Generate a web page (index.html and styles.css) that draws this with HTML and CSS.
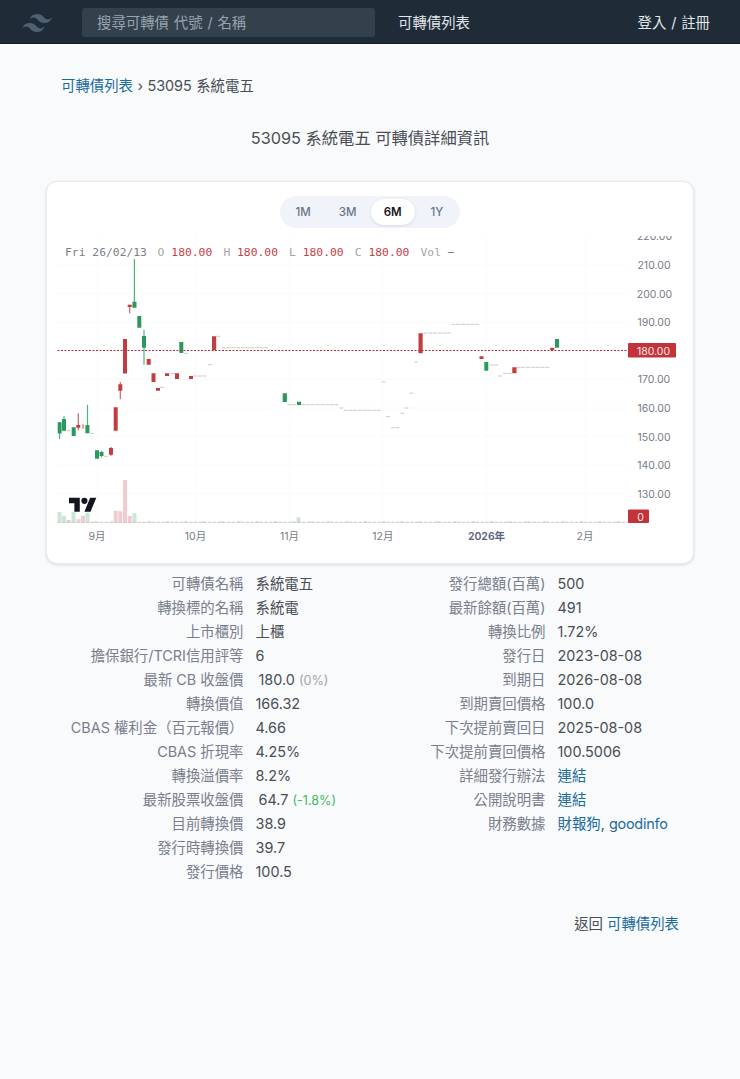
FILE: index.html
```html
<!DOCTYPE html>
<html lang="zh-Hant">
<head>
<meta charset="utf-8">
<title>53095 系統電五 可轉債詳細資訊</title>
<link rel="stylesheet" href="styles.css">
</head>
<body>
<header class="navbar">
  <svg class="logo" viewBox="0 0 54 32.4"><path d="M27 0c-7.2 0-11.7 3.6-13.5 10.8 2.7-3.6 5.85-4.95 9.45-4.05 2.054.513 3.522 2.004 5.147 3.653C30.744 13.09 33.808 16.2 40.5 16.2c7.2 0 11.7-3.6 13.5-10.8-2.7 3.6-5.85 4.95-9.45 4.05-2.054-.513-3.522-2.004-5.147-3.653C36.756 3.11 33.692 0 27 0zM13.5 16.2C6.3 16.2 1.8 19.8 0 27c2.7-3.6 5.85-4.95 9.45-4.05 2.054.514 3.522 2.004 5.147 3.653C17.244 29.29 20.308 32.4 27 32.4c7.2 0 11.7-3.6 13.5-10.8-2.7 3.6-5.85 4.95-9.45 4.05-2.054-.513-3.522-2.004-5.147-3.653C23.256 19.31 20.192 16.2 13.5 16.2z"/></svg>
  <div class="search">搜尋可轉債 代號 / 名稱</div>
  <a class="nav-link">可轉債列表</a>
  <a class="nav-link login">登入 / 註冊</a>
</header>
<main>
  <nav class="breadcrumb"><a class="link">可轉債列表</a> › 53095 系統電五</nav>
  <h1 class="title">53095 系統電五 可轉債詳細資訊</h1>
  <section class="card">
    <div class="tabs"><span class="tab">1M</span><span class="tab">3M</span><span class="tab active">6M</span><span class="tab">1Y</span></div>
    <svg class="chart" viewBox="57 236 626 312">
      <path class="grid" d="M57 265h571M57 293.5h571M57 322h571M57 379h571M57 408h571M57 436.5h571M57 465h571M57 493.5h571M97.5 236v286M195.5 236v286M289.500 236v286M382.500 236v286M486.500 236v286M585.500 236v286"/>
      <g class="vol-up">
        <path d="M57.500 512h4v10.500h-4zM62 515.700h4v6.800h-4zM71.500 512h4v10.500h-4zM85.500 512.700h4v9.800h-4zM132.500 513.300h4v9.200h-4zM296.500 517.300h4v5.200h-4z"/>
      </g>
      <g class="vol-down">
        <path d="M76.500 519.300h4v3.200h-4zM81 515.700h4v6.800h-4zM113.700 510.700h4v11.800h-4zM118.300 511.300h4v11.200h-4zM123 480h4v42.500h-4zM127.700 516h4v6.500h-4zM66.700 520h4v2.500h-4z"/>
      </g>
      <path class="vol-line" d="M57.500 522.300H628"/>
      <path class="vol-line vol-tips" d="M57.500 521.500H628"/>
      <path class="flat" d="M66.700 430.700h4M81.500 428h4M90 433.300h4M104 456.300h4.500M160 387.300h4M171 373.500h4M184 353.300h4M193 376h14M208 364.700h4M216.500 336.300h4M222 347.700h46M287.500 404.700h51.500M339.500 408h3.800M343.700 410.300h37.500M381.700 382h3.800M386 416.700h4M391 427.700h8.500M400.500 413.300h3.700M404.700 408h3.800M409.500 393.200h3.800M414.300 362h3.700M423.700 333h27.500M451.500 324.300h28M489.500 365h8.500M498 376h4M503 373.300h9M516.500 367.300h33.500"/>
      <g class="up">
        <path class="wick" d="M59.500 422v17M64 416.300v14M87.500 404.700v25M101.500 450.700v6.600M134.400 259v46M144 330v34.700"/>
        <path d="M57.700 422.200h3.900v11.200h-3.900zM62 419h4v11.700h-4zM71.700 427.300h4v8.700h-4zM85.400 425h4v8.300h-4zM95 450.300h4v8.400h-4zM99.500 452h4v4h-4zM132.400 301.700h4.100v6h-4.100zM137.300 316h4v11.700h-4zM142 336h4v11.700h-4zM179.300 342h4v11h-4zM282.700 393.300h4.200v8.700h-4.200zM297 401.700h4v3.300h-4zM484.300 362h4v8.700h-4zM555 339h4v8.700h-4z"/>
      </g>
      <g class="down">
        <path class="wick" d="M78.300 413.300v17M83 424.300v4M111 447v8.700M120.300 382v17.300M129.700 304.700v8.600"/>
        <path d="M76.300 425h4v2.700h-4zM109 448h4v6.700h-4zM113.700 407.300h4v23.400h-4zM118.300 384.300h4v6.400h-4zM123 339h4v34.500h-4zM127.700 304.700h4v2.300h-4zM146.700 359h4v5.700h-4zM151.500 373.300h4v8.700h-4zM156 388h4v2.700h-4zM165 373.300h4.200v2.700h-4.200zM175 373.300h4v5.700h-4zM189 376h4v3h-4zM212 336.300h4.200v14h-4.200zM418.500 333.300h4.200v20h-4.200zM479.500 356.300h4v2.700h-4zM512.300 367.300h4.200v6h-4.200zM550.200 347.700h4v2.600h-4z"/>
      </g>
      <path class="price-line" d="M57.500 350.500H628"/>
      <g class="legend">
        <text x="65" y="256" class="leg-date">Fri 26/02/13</text>
        <text x="157.500" y="256">O</text><text x="171.300" y="256" class="leg-num">180.00</text>
        <text x="223.500" y="256">H</text><text x="237" y="256" class="leg-num">180.00</text>
        <text x="289" y="256">L</text><text x="302.700" y="256" class="leg-num">180.00</text>
        <text x="354.800" y="256">C</text><text x="368.400" y="256" class="leg-num">180.00</text>
        <text x="420.500" y="256">Vol</text><text x="447.800" y="256" class="leg-date">−</text>
      </g>
      <g class="axis">
        <text x="654.500" y="240">220.00</text><text x="654" y="269">210.00</text><text x="654.500" y="297.500">200.00</text><text x="654" y="326">190.00</text><text x="654" y="383">170.00</text><text x="654" y="412">160.00</text><text x="654" y="440.500">150.00</text><text x="654" y="469">140.00</text><text x="654" y="497.500">130.00</text>
        <text x="97" y="540">9月</text><text x="195.500" y="540">10月</text><text x="289.500" y="540">11月</text><text x="382.800" y="540">12月</text><text x="486.500" y="540" class="year">2026年</text><text x="585" y="540">2月</text>
      </g>
      <rect class="badge" x="628" y="343" width="48" height="14.500" rx="1"/>
      <rect class="badge" x="628" y="509.400" width="21" height="13.500" rx="1"/>
      <g class="axis badge-text"><text x="653.500" y="354.500">180.00</text><text x="640.500" y="520.500">0</text></g>
      <g class="tv" transform="translate(69 494.700) scale(.77)"><path d="M14 22H7V11H0V4h14v18zM28 22h-8l7.500-18h8L28 22z"/><circle cx="20" cy="8" r="4"/></g>
    </svg>
  </section>
  <section class="details">
    <dl class="list left">
      <dt>可轉債名稱</dt><dd>系統電五</dd>
      <dt>轉換標的名稱</dt><dd>系統電</dd>
      <dt>上市櫃別</dt><dd>上櫃</dd>
      <dt>擔保銀行/TCRI信用評等</dt><dd>6</dd>
      <dt>最新 CB 收盤價</dt><dd class="quote">180.0 <small class="same">(0%)</small></dd>
      <dt>轉換價值</dt><dd>166.32</dd>
      <dt>CBAS 權利金（百元報價）</dt><dd>4.66</dd>
      <dt>CBAS 折現率</dt><dd>4.25%</dd>
      <dt>轉換溢價率</dt><dd>8.2%</dd>
      <dt>最新股票收盤價</dt><dd class="quote">64.7 <small class="drop">(-1.8%)</small></dd>
      <dt>目前轉換價</dt><dd>38.9</dd>
      <dt>發行時轉換價</dt><dd>39.7</dd>
      <dt>發行價格</dt><dd>100.5</dd>
    </dl>
    <dl class="list right">
      <dt>發行總額(百萬)</dt><dd>500</dd>
      <dt>最新餘額(百萬)</dt><dd>491</dd>
      <dt>轉換比例</dt><dd>1.72%</dd>
      <dt>發行日</dt><dd>2023-08-08</dd>
      <dt>到期日</dt><dd>2026-08-08</dd>
      <dt>到期賣回價格</dt><dd>100.0</dd>
      <dt>下次提前賣回日</dt><dd>2025-08-08</dd>
      <dt>下次提前賣回價格</dt><dd>100.5006</dd>
      <dt>詳細發行辦法</dt><dd><a class="link">連結</a></dd>
      <dt>公開說明書</dt><dd><a class="link">連結</a></dd>
      <dt>財務數據</dt><dd><a class="link">財報狗</a>, <a class="link latin">goodinfo</a></dd>
    </dl>
  </section>
  <footer class="back">返回 <a class="link">可轉債列表</a></footer>
</main>
</body>
</html>
```
FILE: styles.css
```css
* { box-sizing: border-box; }
body {
  margin: 0;
  min-height: 1079px;
  background: #f8fafc;
  color: #4a4e55;
  font: 14.4px/24px Inter, "Noto Sans CJK TC", sans-serif;
}
.link { color: #1b6a9f; }
.latin { letter-spacing: -.2px; }
.navbar {
  display: flex;
  align-items: center;
  height: 44px;
  padding: 0 30px 0 22px;
  background: #1f2b36;
  border-bottom: 1px solid #121d26;
  color: #e0e6ec;
}
.logo { width: 30px; height: 18px; margin-top: 2px; fill: #4f6072; }
.search {
  width: 293px;
  height: 29px;
  margin: 1px 0 0 30px;
  padding-left: 15px;
  border-radius: 3px;
  background: #33414d;
  color: #98a3af;
  line-height: 30px;
  word-spacing: .8px;
}
.nav-link { margin: 2px 0 0 23px; }
.login { margin-left: auto; word-spacing: .8px; }
.breadcrumb { margin: 30px 0 0 61px; word-spacing: .4px; }
.title {
  margin: 27px 0 0;
  font-size: 16.3px;
  font-weight: 400;
  line-height: 26px;
  text-align: center;
}
.card {
  width: 648px;
  height: 383px;
  margin: 30px 46px 0;
  padding: 14px 10px 0;
  border: 1px solid #e6eaef;
  border-radius: 11px;
  background: #fff;
  box-shadow: 0 1px 3px rgba(30, 41, 59, .14);
}
.tabs {
  display: flex;
  align-items: center;
  width: 180px;
  height: 32px;
  margin: 0 auto;
  padding: 0 1px;
  border-radius: 16px;
  background: #f0f4fa;
}
.tab {
  width: 44.6px;
  height: 26px;
  border-radius: 13px;
  color: #6b7485;
  font-size: 11.5px;
  font-weight: 500;
  line-height: 26px;
  text-align: center;
}
.tab.active {
  margin: 0 -.4px 0 .6px;
  background: #fff;
  color: #17191e;
  font-weight: 600;
  box-shadow: 0 1px 3px rgba(15, 23, 42, .12);
}
.chart { display: block; width: 626px; height: 312px; margin-top: 8px; }
.grid { fill: none; stroke: #f9fafb; stroke-width: 1; }
.up { fill: #2b995b; }
.down { fill: #c33d40; }
.wick { fill: none; stroke-width: 1.2; }
.up .wick { stroke: #4fb37a; }
.down .wick { stroke: #c9686b; }
.flat { fill: none; stroke: #d5c5c6; stroke-width: 1; stroke-dasharray: 4 .7; }
.price-line { fill: none; stroke: #b5323f; stroke-width: 1; stroke-dasharray: 2 1.500; }
.vol-up { fill: #cbe7d8; }
.vol-down { fill: #f2cbd0; }
.vol-line { fill: none; stroke: #d3c2c2; stroke-width: 1; stroke-dasharray: 3.700 1; }
.vol-tips { stroke: #e7dcdc; stroke-dasharray: 4 14; }
.legend { fill: #a3a5aa; font: 11.35px "DejaVu Sans Mono", monospace; white-space: pre; }
.leg-date { fill: #7c7f85; }
.leg-num { fill: #c44348; }
.axis { fill: #777b84; font-size: 10.5px; text-anchor: middle; }
.year { fill: #5a6480; font-weight: 600; }
.badge { fill: #c3343a; }
.badge-text { fill: #fbe9e9; }
.tv { fill: #12151d; }
.details { display: flex; margin-top: 8px; }
.list { display: grid; grid-auto-rows: 24px; column-gap: 12px; align-content: start; margin: 0; white-space: nowrap; }
.left { grid-template-columns: 243.5px 114px; }
.right { grid-template-columns: 176px 170px; }
dt { color: #7a7e8d; text-align: right; }
dd { margin: 0; }
.quote { padding-left: 3px; }
small { font-size: 12.6px; }
.same { color: #a0a5ae; }
.drop { color: #3fb966; }
.back { margin-top: 28px; padding-right: 61px; text-align: right; }
```
